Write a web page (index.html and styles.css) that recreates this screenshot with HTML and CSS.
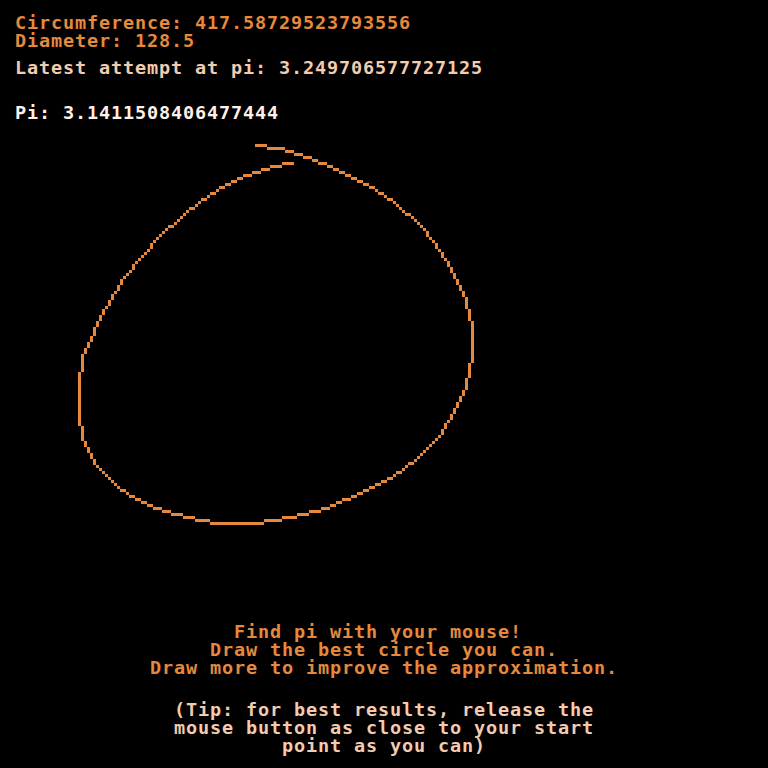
FILE: index.html
```html
<!DOCTYPE html>
<html lang="en">
<head>
<meta charset="utf-8">
<title>Find pi with your mouse</title>
<link rel="stylesheet" href="styles.css">
</head>
<body>
<main class="screen">
  <section class="readout">
    <div class="group measure">
      <p class="line orange">Circumference: 417.58729523793556</p>
      <p class="line orange">Diameter: 128.5</p>
    </div>
    <p class="line peach attempt">Latest attempt at pi: 3.249706577727125</p>
    <p class="line white result">Pi: 3.1411508406477444</p>
  </section>

  <svg class="drawing" viewBox="0 0 256 256" width="768" height="768" aria-hidden="true">
    <path class="stroke" d="
      M85 48h4v1h-4z M89 49h6v1h-6z M95 50h3v1h-3z M98 51h3v1h-3z M101 52h3v1h-3z
      M104 53h2v1h-2z M106 54h3v1h-3z M109 55h2v1h-2z M111 56h2v1h-2z M113 57h2v1h-2z
      M115 58h2v1h-2z M117 59h2v1h-2z M119 60h2v1h-2z M121 61h2v1h-2z M123 62h2v1h-2z
      M125 63h1v1h-1z M126 64h2v1h-2z M128 65h1v1h-1z M129 66h2v1h-2z M131 67h1v1h-1z
      M132 68h1v1h-1z M133 69h1v1h-1z M134 70h1v1h-1z M135 71h2v1h-2z M137 72h1v1h-1z
      M138 73h1v1h-1z M139 74h1v1h-1z M140 75h1v1h-1z M141 76h1v1h-1z M142 77h1v2h-1z
      M143 79h1v1h-1z M144 80h1v1h-1z M145 81h1v2h-1z M146 83h1v1h-1z M147 84h1v2h-1z
      M148 86h1v1h-1z M149 87h1v2h-1z M150 89h1v2h-1z M151 91h1v2h-1z M152 93h1v2h-1z
      M153 95h1v2h-1z M154 97h1v2h-1z M155 99h1v4h-1z M156 103h1v4h-1z M157 107h1v14h-1z
      M156 121h1v5h-1z M155 126h1v4h-1z M154 130h1v2h-1z M153 132h1v2h-1z M152 134h1v2h-1z
      M151 136h1v2h-1z M150 138h1v2h-1z M149 140h1v1h-1z M148 141h1v2h-1z M147 143h1v2h-1z
      M146 145h1v1h-1z M145 146h1v1h-1z M144 147h1v1h-1z M143 148h1v1h-1z M142 149h1v1h-1z
      M141 150h1v1h-1z M140 151h1v1h-1z M139 152h1v1h-1z M138 153h1v1h-1z M136 154h2v1h-2z
      M135 155h1v1h-1z M134 156h1v1h-1z M132 157h2v1h-2z M131 158h1v1h-1z M129 159h2v1h-2z
      M127 160h2v1h-2z M125 161h2v1h-2z M123 162h2v1h-2z M121 163h2v1h-2z M119 164h2v1h-2z
      M117 165h2v1h-2z M114 166h3v1h-3z M112 167h2v1h-2z M110 168h2v1h-2z M107 169h3v1h-3z
      M103 170h4v1h-4z M99 171h4v1h-4z M94 172h5v1h-5z M88 173h6v1h-6z M70 174h18v1h-18z
      M65 173h5v1h-5z M61 172h4v1h-4z M57 171h4v1h-4z M54 170h3v1h-3z M51 169h3v1h-3z
      M49 168h2v1h-2z M47 167h2v1h-2z M45 166h2v1h-2z M43 165h2v1h-2z M42 164h1v1h-1z
      M40 163h2v1h-2z M39 162h1v1h-1z M38 161h1v1h-1z M37 160h1v1h-1z M36 159h1v1h-1z
      M35 158h1v1h-1z M34 157h1v1h-1z M33 156h1v1h-1z M32 155h1v1h-1z M31 153h1v2h-1z
      M30 151h1v2h-1z M29 149h1v2h-1z M28 147h1v2h-1z M27 142h1v5h-1z M26 124h1v18h-1z
      M27 118h1v6h-1z M28 116h1v2h-1z M29 114h1v2h-1z M30 112h1v2h-1z M31 109h1v3h-1z
      M32 107h1v2h-1z M33 105h1v2h-1z M34 103h1v2h-1z M35 102h1v1h-1z M36 100h1v2h-1z
      M37 98h1v2h-1z M38 97h1v1h-1z M39 95h1v2h-1z M40 93h1v2h-1z M41 92h1v1h-1z
      M42 91h1v1h-1z M43 90h1v1h-1z M44 88h1v2h-1z M45 87h1v1h-1z M46 86h1v1h-1z
      M47 85h1v1h-1z M48 84h1v1h-1z M49 83h1v1h-1z M50 81h1v2h-1z M51 80h1v1h-1z
      M52 79h1v1h-1z M53 78h1v1h-1z M54 77h1v1h-1z M55 76h1v1h-1z M56 75h2v1h-2z
      M58 74h1v1h-1z M59 73h1v1h-1z M60 72h1v1h-1z M61 71h1v1h-1z M62 70h1v1h-1z
      M63 69h2v1h-2z M65 68h1v1h-1z M66 67h1v1h-1z M67 66h2v1h-2z M69 65h1v1h-1z
      M70 64h2v1h-2z M72 63h1v1h-1z M73 62h2v1h-2z M75 61h2v1h-2z M77 60h2v1h-2z
      M79 59h2v1h-2z M81 58h3v1h-3z M84 57h3v1h-3z M87 56h3v1h-3z M90 55h4v1h-4z
      M94 54h4v1h-4z"/>
  </svg>

  <section class="instructions">
    <div class="group">
      <p class="line orange">Find pi with your mouse!&nbsp;</p>
      <p class="line orange">Draw the best circle you can.</p>
      <p class="line orange">Draw more to improve the approximation.</p>
    </div>
    <div class="group tip">
      <p class="line peach">(Tip: for best results, release the</p>
      <p class="line peach">mouse button as close to your start</p>
      <p class="line peach">point as you can)</p>
    </div>
  </section>
</main>
</body>
</html>
```

FILE: styles.css
```css
* {
  box-sizing: border-box;
}

html,
body {
  margin: 0;
  padding: 0;
  background: #000;
}

.screen {
  position: relative;
  width: 768px;
  height: 768px;
  background: #000;
  display: flex;
  flex-direction: column;
  overflow: hidden;
  font-family: "DejaVu Sans Mono", "Liberation Mono", monospace;
  font-weight: bold;
  font-size: 18.5px;
  letter-spacing: 0.86px;
  line-height: 18px;
}

.line {
  margin: 0;
  white-space: pre;
}

.orange {
  color: #e4893e;
}

.peach {
  color: #f3cbae;
}

.white {
  color: #fff1e8;
}

.readout {
  padding: 14px 0 0 15px;
  display: flex;
  flex-direction: column;
}

.attempt {
  margin-top: 9px;
}

.result {
  margin-top: 27px;
}

.drawing {
  position: absolute;
  left: 0;
  top: 0;
  width: 768px;
  height: 768px;
  shape-rendering: crispEdges;
}

.stroke {
  fill: #e4893e;
}

.instructions {
  margin-top: auto;
  padding-bottom: 13px;
  display: flex;
  flex-direction: column;
  align-items: center;
  text-align: center;
}

.group {
  display: flex;
  flex-direction: column;
  align-items: center;
}

.measure {
  align-items: flex-start;
}

.tip {
  margin-top: 24px;
}
```
